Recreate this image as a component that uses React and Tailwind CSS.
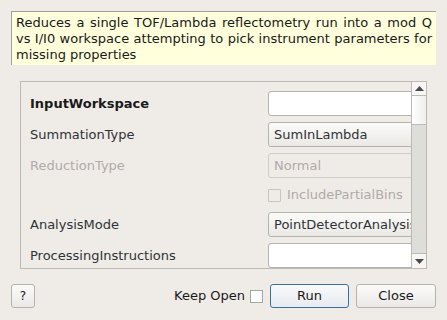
import React from "react";

function Field({ children, disabled, combo }) {
  return (
    <div
      className={
        "h-[25px] w-[170px] shrink-0 rounded-[3px] border px-[5px] flex items-center " +
        (disabled
          ? "border-[#cfcbc6] text-[#b0aca8] bg-[#efebe7]"
          : combo
          ? "border-[#b6b2ad] text-[#2e3436] bg-gradient-to-b from-[#fbfbfa] to-[#ebe9e6]"
          : "border-[#b6b2ad] bg-white")
      }
    >
      {children}
    </div>
  );
}

function Row({ label, bold, disabled, children }) {
  return (
    <div className="flex items-center h-[25px]">
      <div
        className={
          "w-[238px] shrink-0 " +
          (bold ? "font-bold text-[#1a1a1a]" : disabled ? "text-[#b0aca8]" : "text-[#2e3436]")
        }
      >
        {label}
      </div>
      {children}
    </div>
  );
}

export default function App() {
  return (
    <div
      className="w-[447px] h-[320px] bg-[#efebe7] text-[13px] text-[#2e3436] overflow-hidden flex flex-col"
      style={{ fontFamily: '"DejaVu Sans", sans-serif' }}
    >
      {/* Description */}
      <div className="ml-[11px] mt-[11px] w-[425px] h-[54px] bg-[#ffffdc] border-l border-t border-[#a0a0a0] pl-[4px] pr-[4px] pt-[3px] leading-[16px] text-[#1a1a1a] text-justify">
        Reduces a single TOF/Lambda reflectometry run into a mod Q vs I/I0 workspace attempting to pick instrument parameters for missing properties
      </div>

      {/* Properties frame */}
      <div className="ml-[20px] mt-[16px] w-[407px] h-[188px] border border-[#bdb9b4] flex">
        <div className="flex-1 overflow-hidden pl-[9px] pt-[9px] flex flex-col gap-[6px]">
          <Row label="InputWorkspace" bold>
            <Field />
          </Row>
          <Row label="SummationType">
            <Field combo>SumInLambda</Field>
          </Row>
          <Row label="ReductionType" disabled>
            <Field disabled>Normal</Field>
          </Row>
          <div className="flex items-center h-[23px]">
            <div className="w-[238px] shrink-0" />
            <div className="w-[13px] h-[13px] border border-[#c8c4bf] rounded-[1px]" />
            <span className="ml-[6px] text-[#b0aca8]">IncludePartialBins</span>
          </div>
          <Row label="AnalysisMode">
            <Field combo>PointDetectorAnalysis</Field>
          </Row>
          <Row label="ProcessingInstructions">
            <Field />
          </Row>
        </div>

        {/* Scrollbar */}
        <div className="w-[15px] border-l border-[#bdb9b4] flex flex-col bg-[#dfddda]">
          <div className="h-[14px] border-b border-[#bdb9b4] bg-[#f7f6f5] flex items-center justify-center">
            <svg width="9" height="5" viewBox="0 0 9 5">
              <path d="M0 5 L4.5 0 L9 5 Z" fill="#4a4a4a" />
            </svg>
          </div>
          <div className="h-[29px] border-b border-[#bdb9b4] bg-gradient-to-r from-[#ffffff] to-[#f0efed]" />
          <div className="flex-1" />
          <div className="h-[15px] border-t border-[#bdb9b4] bg-[#f7f6f5] flex items-center justify-center">
            <svg width="9" height="5" viewBox="0 0 9 5">
              <path d="M0 0 L9 0 L4.5 5 Z" fill="#4a4a4a" />
            </svg>
          </div>
        </div>
      </div>

      {/* Buttons */}
      <div className="mt-[15px] flex items-center h-[24px] pl-[11px]">
        <button className="w-[24px] h-[24px] rounded-[3px] border border-[#b6b2ad] bg-gradient-to-b from-[#fbfbfa] to-[#ebe9e6] text-[12px] text-[#1a1a1a]">
          ?
        </button>
        <div className="flex-1" />
        <span className="text-[#1a1a1a]">Keep Open</span>
        <div className="ml-[5px] w-[13px] h-[13px] border border-[#a9a5a0] bg-white" />
        <button className="ml-[7px] w-[79px] h-[24px] rounded-[3px] border border-[#3b6fa2] bg-gradient-to-b from-[#f8f9fb] to-[#e7ebef] text-[#1a1a1a]">
          Run
        </button>
        <button className="ml-[7px] mr-[11px] w-[80px] h-[24px] rounded-[3px] border border-[#b6b2ad] bg-gradient-to-b from-[#fbfbfa] to-[#ebe9e6] text-[#1a1a1a]">
          Close
        </button>
      </div>
    </div>
  );
}
